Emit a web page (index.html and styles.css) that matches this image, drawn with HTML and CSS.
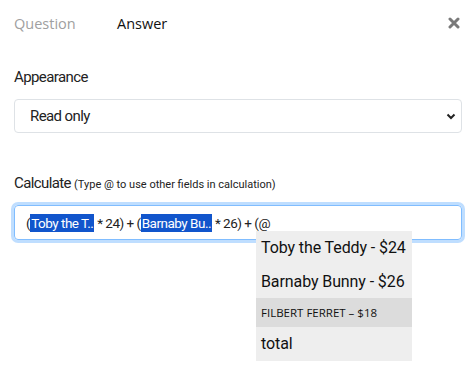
FILE: index.html
```html
<!DOCTYPE html>
<html>
<head>
<meta charset="utf-8">
<link rel="stylesheet" href="styles.css">
</head>
<body>
<div class="panel">
  <div class="tabs">
    <span class="tab">Question</span>
    <span class="tab active">Answer</span>
    <span class="close"><svg width="12" height="12" viewBox="0 0 12 12"><path d="M2 2 L10 10 M10 2 L2 10" stroke="#7a7a7a" stroke-width="3" stroke-linecap="round"/></svg></span>
  </div>
  <div class="field">
    <div class="label">Appearance</div>
    <div class="select">
      <span>Read only</span>
      <svg width="10" height="7" viewBox="0 0 10 7"><path d="M1.5 1.5 L5 5 L8.5 1.5" stroke="#222" stroke-width="2" fill="none"/></svg>
    </div>
  </div>
  <div class="field calc">
    <div class="label">Calculate <small>(Type @ to use other fields in calculation)</small></div>
    <div class="input-wrap">
      <div class="input">(<span class="chip">Toby the T..</span> * 24) + (<span class="chip">Barnaby Bu..</span> * 26) + (@</div>
      <ul class="menu">
        <li>Toby the Teddy - $24</li>
        <li>Barnaby Bunny - $26</li>
        <li class="hover">FILBERT FERRET – $18</li>
        <li>total</li>
      </ul>
    </div>
  </div>
</div>
</body>
</html>
```
FILE: styles.css
```css
* { box-sizing: border-box; }
html, body { min-height: 100%; height: 100%; }
body {
  margin: 0;
  background: #fff;
  font-family: Roboto, "Liberation Sans", sans-serif;
  color: #212529;
}
.panel {
  padding: 0 9px 0 14px;
  min-height: 369px;
}
.tabs {
  display: flex;
  align-items: center;
  height: 46px;
  font-family: "Open Sans", "Noto Sans", sans-serif;
  font-size: 14.5px;
}
.tab {
  color: #a0a0a0;
  width: 103px;
}
.tab.active { color: #111; }
.close {
  margin-left: auto;
  margin-right: 2px;
  display: flex;
}
.field { margin-top: 21px; }
.label {
  font-size: 15px;
  letter-spacing: -0.6px;
  color: #222;
  line-height: 20px;
}
.label small { font-size: 11px; letter-spacing: 0; }
.select {
  margin-top: 12px;
  height: 34px;
  border: 1px solid #dee2e6;
  border-radius: 4px;
  display: flex;
  align-items: center;
  justify-content: space-between;
  padding: 0 5px 0 15px;
  font-size: 15px;
  letter-spacing: -0.6px;
  color: #222;
}
.calc { margin-top: 40px; }
.input-wrap { position: relative; margin-top: 10px; }
.input {
  height: 35px;
  border: 1px solid #80bdff;
  border-radius: 4px;
  box-shadow: 0 0 0 3px rgba(0,123,255,.25);
  display: flex;
  align-items: center;
  padding: 0 11px;
  font-size: 13.5px;
  letter-spacing: -0.5px;
  color: #222;
  white-space: pre;
}
.chip {
  background: #1155cc;
  color: #fff;
  padding: 1px 1px;
}
.menu {
  position: absolute;
  left: 242px;
  top: 26px;
  width: 156px;
  margin: 0;
  padding: 0;
  list-style: none;
  background: #eee;
}
.menu li {
  height: 33.5px;
  line-height: 33.5px;
  padding-left: 5px;
  font-size: 16px;
  letter-spacing: -0.1px;
  color: #111;
}
.menu li.hover {
  background: #dcdcdc;
  font-family: "Open Sans", "Noto Sans", sans-serif;
  font-size: 11.5px;
  letter-spacing: 0;
  height: 29px;
  line-height: 29px;
}
```
